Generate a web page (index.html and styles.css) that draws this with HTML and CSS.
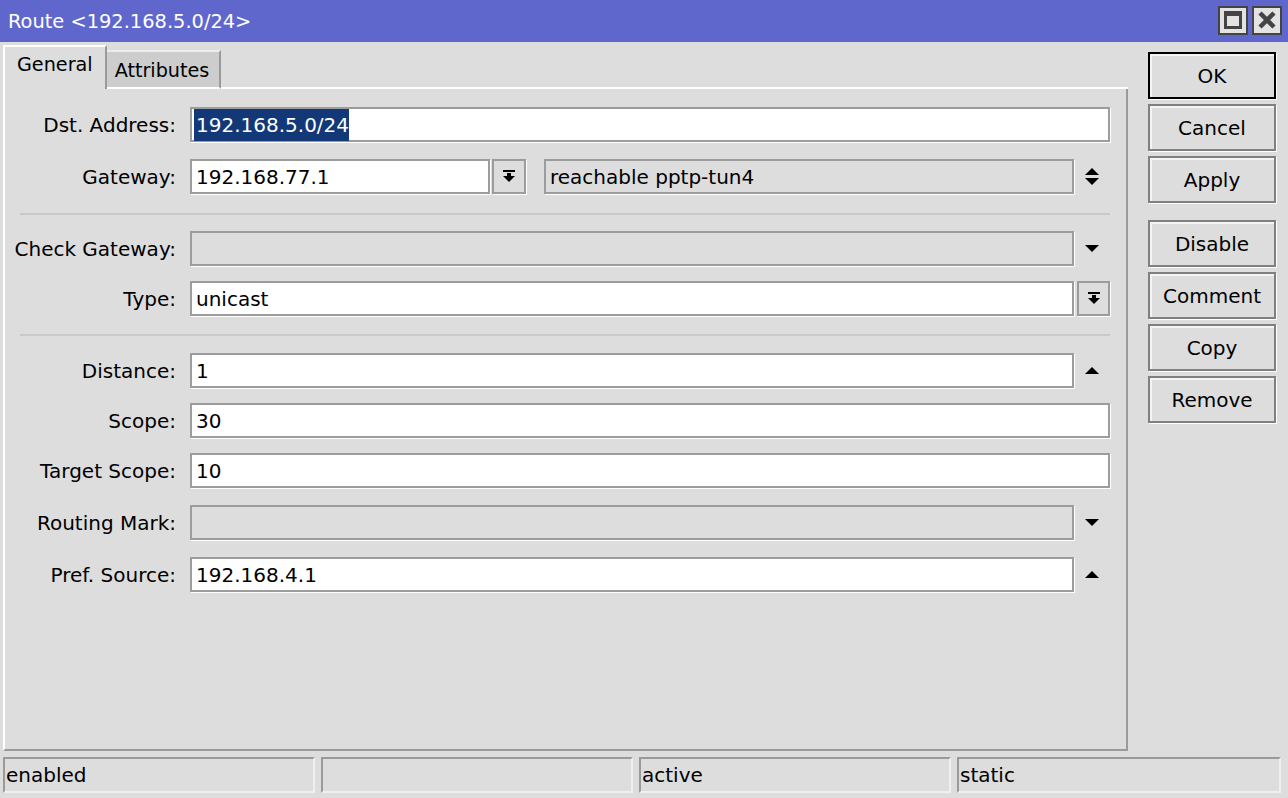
FILE: index.html
```html
<!DOCTYPE html>
<html lang="en">
<head>
    <meta charset="UTF-8">
    <title>Route &lt;192.168.5.0/24&gt;</title>
    <link rel="stylesheet" href="styles.css">
</head>
<body>
    <div class="titlebar">
        <div class="title">Route &lt;192.168.5.0/24&gt;</div>
        <div class="win-buttons">
            <div class="win-btn">
                <svg width="18" height="18" viewBox="0 0 18 18"><rect x="1.5" y="1.5" width="15" height="15" fill="none" stroke="#444" stroke-width="3"/><rect x="0" y="0" width="18" height="5" fill="#444"/></svg>
            </div>
            <div class="win-btn">
                <svg width="18" height="18" viewBox="0 0 18 18"><path d="M2 2 L16 16 M16 2 L2 16" stroke="#444" stroke-width="4.5"/></svg>
            </div>
        </div>
    </div>

    <div class="main">
        <div class="left">
            <div class="tabs">
                <div class="tab active">General</div>
                <div class="tab">Attributes</div>
                <div class="tab-fill"></div>
            </div>
            <div class="panel">
                <div class="row mb17">
                    <div class="label">Dst. Address:</div>
                    <div class="field"><span class="selected">192.168.5.0/24</span></div>
                </div>
                <div class="row mb19">
                    <div class="label">Gateway:</div>
                    <div class="field short">192.168.77.1</div>
                    <div class="drop-btn">
                        <svg width="12" height="13" viewBox="0 0 12 13"><rect x="0" y="0" width="12" height="2" fill="#000"/><rect x="4" y="3" width="4" height="3" fill="#000"/><path d="M0 6 H12 L6 12 Z" fill="#000"/></svg>
                    </div>
                    <div class="field gray gw-state">reachable pptp-tun4</div>
                    <div class="icon-cell">
                        <svg width="16" height="20" viewBox="0 0 16 20"><path d="M1 8 L8 1 L15 8 Z" fill="#000"/><path d="M1 11 H15 L8 18 Z" fill="#000"/></svg>
                    </div>
                </div>
                <div class="sep"></div>
                <div class="row">
                    <div class="label">Check Gateway:</div>
                    <div class="field gray"></div>
                    <div class="icon-cell">
                        <svg width="16" height="10" viewBox="0 0 16 10"><path d="M1 1 H15 L8 8 Z" fill="#000"/></svg>
                    </div>
                </div>
                <div class="row mb18">
                    <div class="label">Type:</div>
                    <div class="field">unicast</div>
                    <div class="drop-btn type-btn">
                        <svg width="12" height="13" viewBox="0 0 12 13"><rect x="0" y="0" width="12" height="2" fill="#000"/><rect x="4" y="3" width="4" height="3" fill="#000"/><path d="M0 6 H12 L6 12 Z" fill="#000"/></svg>
                    </div>
                </div>
                <div class="sep sep-b"></div>
                <div class="row">
                    <div class="label">Distance:</div>
                    <div class="field">1</div>
                    <div class="icon-cell">
                        <svg width="16" height="10" viewBox="0 0 16 10"><path d="M1 8 L8 1 L15 8 Z" fill="#000"/></svg>
                    </div>
                </div>
                <div class="row">
                    <div class="label">Scope:</div>
                    <div class="field">30</div>
                </div>
                <div class="row mb17">
                    <div class="label">Target Scope:</div>
                    <div class="field">10</div>
                </div>
                <div class="row mb17">
                    <div class="label">Routing Mark:</div>
                    <div class="field gray"></div>
                    <div class="icon-cell">
                        <svg width="16" height="10" viewBox="0 0 16 10"><path d="M1 1 H15 L8 8 Z" fill="#000"/></svg>
                    </div>
                </div>
                <div class="row">
                    <div class="label">Pref. Source:</div>
                    <div class="field">192.168.4.1</div>
                    <div class="icon-cell">
                        <svg width="16" height="10" viewBox="0 0 16 10"><path d="M1 8 L8 1 L15 8 Z" fill="#000"/></svg>
                    </div>
                </div>
            </div>
        </div>

        <div class="actions">
            <div class="btn default">OK</div>
            <div class="btn">Cancel</div>
            <div class="btn">Apply</div>
            <div class="btn spaced">Disable</div>
            <div class="btn">Comment</div>
            <div class="btn">Copy</div>
            <div class="btn">Remove</div>
        </div>
    </div>

    <div class="statusbar">
        <div class="status-cell">enabled</div>
        <div class="status-cell"></div>
        <div class="status-cell">active</div>
        <div class="status-cell">static</div>
    </div>
</body>
</html>
```

FILE: styles.css
```css
body {
    margin: 0;
    width: 1288px;
    height: 798px;
    overflow: hidden;
    background-color: #dddddd;
    font-family: "DejaVu Sans", Verdana, sans-serif;
    font-size: 20px;
    color: #000;
}
.titlebar {
    height: 42px;
    background-color: #5f67cd;
    display: flex;
    align-items: center;
    justify-content: space-between;
    padding: 0 6px 0 8px;
}
.title {
    color: #fff;
    font-size: 19.4px;
}
.win-buttons {
    display: flex;
    gap: 4px;
    margin-top: -2px;
}
.win-btn {
    width: 26px;
    height: 25px;
    border: 2px solid #444;
    background-color: #e3e3e3;
    display: flex;
    align-items: center;
    justify-content: center;
}
.main {
    display: flex;
    height: 705px;
    padding: 4px 0 0 3px;
}
.left {
    width: 1125px;
    display: flex;
    flex-direction: column;
}
.tabs {
    display: flex;
    align-items: flex-end;
    height: 43px;
    font-size: 19.2px;
}
.tab {
    box-sizing: border-box;
    height: 39px;
    padding: 2px 10px 0 8px;
    background-color: #cdcdcd;
    border-top: 2px solid #ececec;
    border-right: 2px solid #9a9a9a;
    border-bottom: 2px solid #fff;
    display: flex;
    align-items: center;
}
.tab.active {
    background-color: #dddddd;
    height: 44px;
    border-top: 2px solid #fff;
    border-left: 2px solid #fff;
    border-bottom: none;
    padding: 0 12px 8px 12px;
}
.tab-fill {
    flex: 1;
    border-bottom: 2px solid #fff;
}
.panel {
    flex: 1;
    border-left: 2px solid #fff;
    border-right: 2px solid #9a9a9a;
    border-bottom: 2px solid #9a9a9a;
    padding: 18px 16px 0 0;
}
.row {
    display: flex;
    align-items: center;
    height: 35px;
    margin-bottom: 15px;
}
.row.mb17 {
    margin-bottom: 17px;
}
.row.mb18 {
    margin-bottom: 18px;
}
.row.mb19 {
    margin-bottom: 19px;
}
.label {
    width: 171px;
    margin-right: 14px;
    text-align: right;
    flex-shrink: 0;
    white-space: nowrap;
}
.field {
    flex: 1;
    height: 35px;
    box-sizing: border-box;
    background-color: #fff;
    border: 2px solid #9c9c9c;
    box-shadow: 1px 1px 0 #fff;
    padding: 0 4px;
    display: flex;
    align-items: center;
    white-space: nowrap;
}
.field.gray {
    background-color: #dddddd;
}
.field.short {
    flex: 0 0 300px;
}
.gw-state {
    margin-left: 18px;
}
.selected {
    background-color: #123878;
    color: #fff;
    padding: 4px 0 4px 2px;
    margin-left: -2px;
}
.drop-btn {
    width: 34px;
    height: 35px;
    box-sizing: border-box;
    border: 2px solid #9c9c9c;
    box-shadow: 1px 1px 0 #fff;
    margin-left: 2px;
    display: flex;
    align-items: center;
    justify-content: center;
    flex-shrink: 0;
}
.type-btn {
    width: 33px;
    margin-left: 3px;
}
.icon-cell {
    width: 36px;
    height: 35px;
    display: flex;
    align-items: center;
    justify-content: center;
    flex-shrink: 0;
}
.sep {
    height: 2px;
    background-color: #c9c9c9;
    margin: 0 0 16px 15px;
}
.sep.sep-b {
    margin-bottom: 17px;
}
.actions {
    display: flex;
    flex-direction: column;
    gap: 5px;
    margin-left: 20px;
    padding-top: 6px;
}
.btn {
    width: 128px;
    height: 47px;
    box-sizing: border-box;
    border: 2px solid #808080;
    box-shadow: inset 2px 2px 0 #f4f4f4, 1px 1px 0 #fff;
    display: flex;
    align-items: center;
    justify-content: center;
}
.btn.default {
    border-color: #000;
}
.btn.spaced {
    margin-top: 12px;
}
.statusbar {
    display: grid;
    grid-template-columns: 312px 312px 312px 324px;
    column-gap: 6px;
    padding-left: 3px;
    margin-top: 6px;
}
.status-cell {
    height: 36px;
    box-sizing: border-box;
    border-top: 2px solid #9a9a9a;
    border-left: 2px solid #9a9a9a;
    border-bottom: 2px solid #f0f0f0;
    border-right: 2px solid #f0f0f0;
    padding-left: 1px;
    display: flex;
    align-items: center;
}
```
